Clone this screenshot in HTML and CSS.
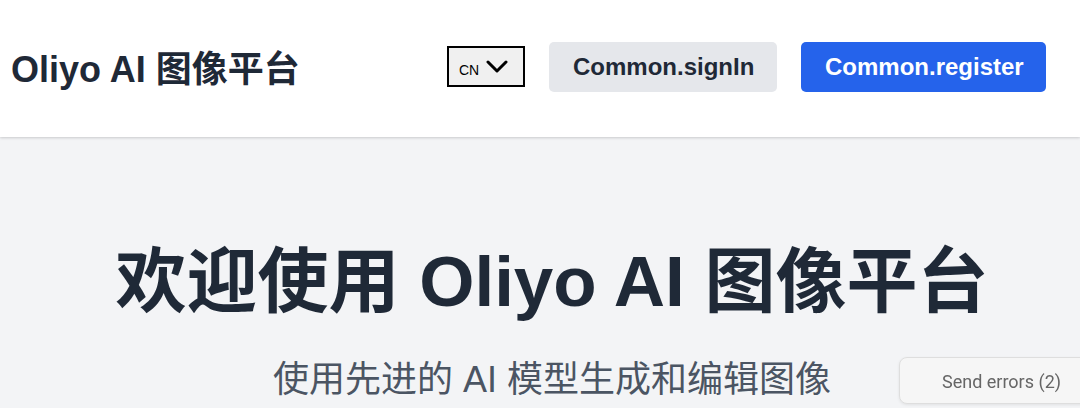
FILE: index.html
```html
<!DOCTYPE html>
<html lang="zh-CN">
<head>
<meta charset="utf-8">
<title>Oliyo AI 图像平台</title>
<link rel="stylesheet" href="styles.css">
</head>
<body>
<header class="header">
  <div class="logo">Oliyo AI 图像平台</div>
  <nav class="actions">
    <div class="lang">
      <span class="lang-code">CN</span>
      <svg class="chev" width="22" height="14" viewBox="0 0 22 14"><path d="M2 2 L11 11 L20 2" fill="none" stroke="#000" stroke-width="3" stroke-linecap="round" stroke-linejoin="round"/></svg>
    </div>
    <button class="btn btn-gray">Common.signIn</button>
    <button class="btn btn-blue">Common.register</button>
  </nav>
</header>
<main class="hero">
  <h1 class="title">欢迎使用 Oliyo AI 图像平台</h1>
  <p class="subtitle">使用先进的 AI 模型生成和编辑图像</p>
</main>
<div class="send-errors">Send errors (2)</div>
</body>
</html>
```
FILE: styles.css
```css
* { box-sizing: border-box; }
html, body { margin: 0; padding: 0; }
body {
  background: #f3f4f6;
  font-family: "Liberation Sans", Arial, "Noto Sans CJK SC", sans-serif;
  color: #1f2937;
  height: 408px;
  overflow: hidden;
}
.header {
  height: 137px;
  background: #fff;
  display: flex;
  align-items: center;
  justify-content: space-between;
  padding: 0 34px 4px 11px;
  box-shadow: 0 1px 3px rgba(0,0,0,0.12), 0 1px 2px rgba(0,0,0,0.06);
  position: relative;
}
.logo {
  font-size: 36px;
  font-weight: 700;
  color: #1f2937;
  margin-top: -2px;
}
.actions {
  display: flex;
  align-items: center;
}
.lang {
  width: 78px;
  height: 41px;
  border: 2px solid #000;
  background: #f0f0f0;
  display: flex;
  align-items: center;
  padding-left: 10px;
  gap: 7px;
  margin-right: 24px;
}
.lang-code {
  font-family: "Liberation Sans", Arial, sans-serif;
  font-size: 14px;
  color: #000;
  margin-top: 6px;
}
.btn {
  height: 50px;
  border: none;
  border-radius: 5px;
  font-family: "Liberation Sans", Arial, sans-serif;
  font-weight: 700;
  font-size: 24px;
  padding: 0 24px;
}
.btn-gray {
  background: #e5e7eb;
  color: #1f2937;
  width: 228px;
  margin-right: 24px;
}
.btn-blue {
  background: #2563eb;
  color: #fff;
  width: 245px;
}
.hero {
  text-align: center;
  padding: 101px 0 0 24px;
}
.title {
  margin: 0;
  font-size: 71px;
  line-height: 87px;
  font-weight: 700;
  color: #1f2937;
}
.subtitle {
  margin: 33px 0 0;
  font-size: 36px;
  line-height: 44px;
  color: #4b5563;
}
.send-errors {
  position: fixed;
  left: 899px;
  top: 357px;
  width: 200px;
  height: 47px;
  background: #f6f6f6;
  border: 1px solid #dedede;
  border-radius: 8px;
  box-shadow: 0 1px 3px rgba(0,0,0,0.08);
  font-family: Roboto, "Liberation Sans", sans-serif;
  font-size: 18px;
  color: #666;
  padding: 13px 0 0 42px;
}
```
